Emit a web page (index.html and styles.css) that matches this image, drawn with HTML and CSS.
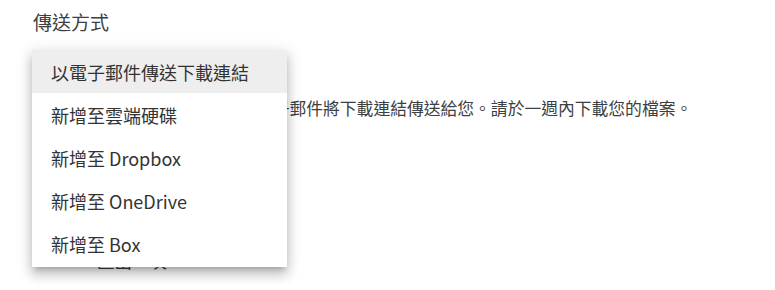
FILE: index.html
```html
<!DOCTYPE html>
<html lang="zh-Hant">
<head>
<meta charset="utf-8">
<link rel="stylesheet" href="styles.css">
</head>
<body>
<div class="page">
  <h2 class="title">傳送方式</h2>
  <div class="select-slot"></div>
  <p class="desc">我們會透過電子郵件將下載連結傳送給您。請於一週內下載您的檔案。</p>
  <div class="freq">
    <span class="radio-label">匯出一次</span>
  </div>
  <ul class="menu">
    <li class="item active">以電子郵件傳送下載連結</li>
    <li class="item">新增至雲端硬碟</li>
    <li class="item">新增至 Dropbox</li>
    <li class="item">新增至 OneDrive</li>
    <li class="item">新增至 Box</li>
  </ul>
</div>
</body>
</html>
```
FILE: styles.css
```css
html, body {
  margin: 0;
  padding: 0;
  background: #fff;
}
body {
  width: 775px;
  height: 290px;
  overflow: hidden;
  font-family: "Noto Sans CJK TC", "Noto Sans", sans-serif;
  color: #3c4043;
}
.page {
  position: relative;
  padding: 7px 0 0 33px;
}
.title {
  margin: 0;
  font-size: 19px;
  font-weight: 400;
  line-height: 30px;
  color: #3c4043;
}
.select-slot {
  height: 48px;
}
.desc {
  margin: 11px 0 0 139px;
  font-size: 16.8px;
  line-height: 24px;
  color: #3c4043;
  white-space: nowrap;
}
.freq {
  display: flex;
  align-items: center;
  margin: 129px 0 0 64px;
}
.radio-label {
  font-size: 17.5px;
  line-height: 24px;
  color: #3c4043;
}
.menu {
  position: absolute;
  left: 32px;
  top: 50px;
  width: 255px;
  margin: 0;
  padding: 0 0 2px;
  list-style: none;
  background: #fff;
  box-shadow: 0 5px 5px -3px rgba(0,0,0,.2), 0 8px 10px 1px rgba(0,0,0,.14), 0 3px 14px 2px rgba(0,0,0,.12);
}
.item {
  height: 43px;
  display: flex;
  align-items: center;
  padding-left: 19px;
  font-size: 18px;
  color: #333;
}
.item.active {
  background: #eeeeee;
}
```
